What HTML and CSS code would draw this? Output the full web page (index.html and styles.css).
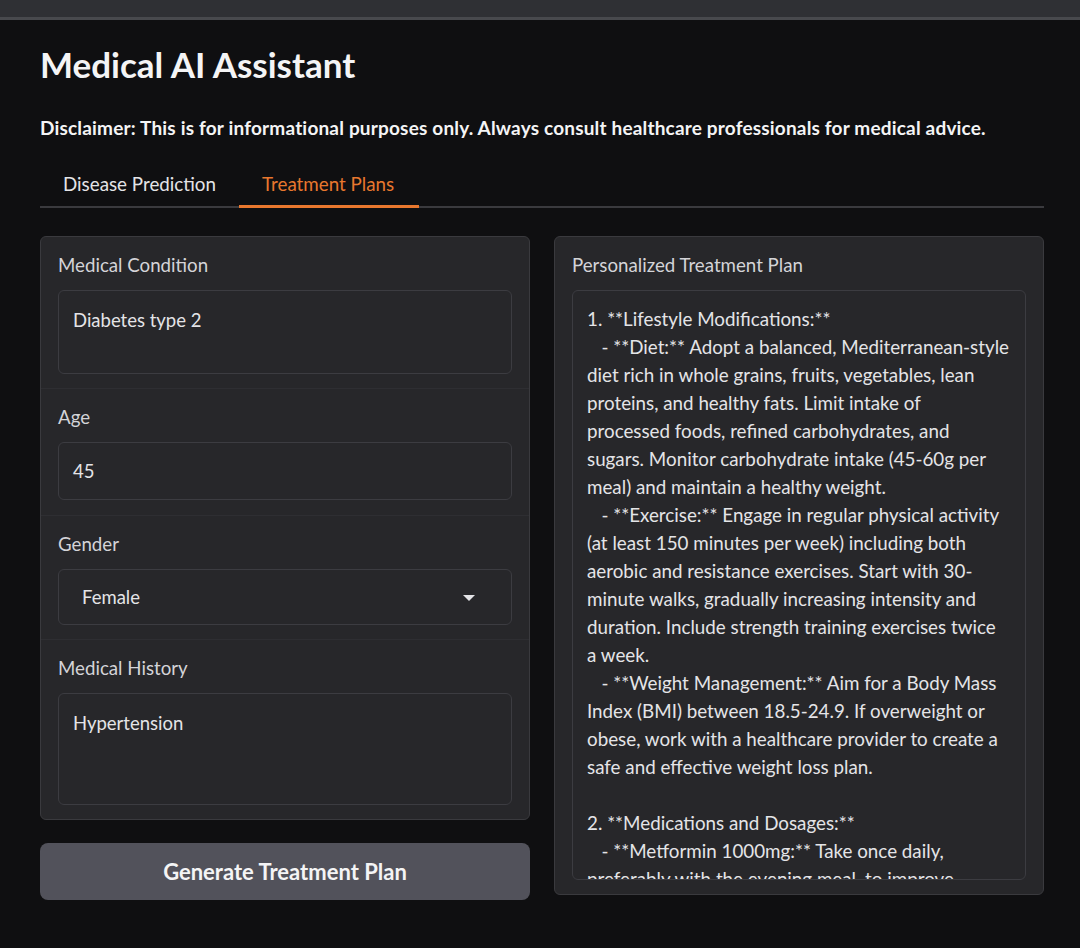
FILE: index.html
```html
<!DOCTYPE html>
<html lang="en">
<head>
<meta charset="utf-8">
<title>Medical AI Assistant</title>
<link rel="stylesheet" href="styles.css">
</head>
<body>
<div class="topbar"></div>
<main class="app">
  <h1 class="title">Medical AI Assistant</h1>
  <p class="disclaimer">Disclaimer: This is for informational purposes only. Always consult healthcare professionals for medical advice.</p>
  <nav class="tabs">
    <button class="tab">Disease Prediction</button>
    <button class="tab active">Treatment Plans</button>
  </nav>
  <div class="row">
    <div class="col">
      <section class="panel form">
        <div class="block">
          <label class="label">Medical Condition</label>
          <div class="field area-sm">Diabetes type 2</div>
        </div>
        <div class="block">
          <label class="label">Age</label>
          <div class="field single">45</div>
        </div>
        <div class="block">
          <label class="label">Gender</label>
          <div class="field select">
            <span>Female</span>
            <svg class="caret" width="14" height="8" viewBox="0 0 14 8"><path d="M1 1 L13 1 L7 7 Z" fill="#e4e4e7"/></svg>
          </div>
        </div>
        <div class="block">
          <label class="label">Medical History</label>
          <div class="field area-md">Hypertension</div>
        </div>
      </section>
      <button class="generate">Generate Treatment Plan</button>
    </div>
    <div class="col">
      <section class="panel output">
        <div class="block">
          <label class="label">Personalized Treatment Plan</label>
          <div class="field plan"><div class="plan-text">1. **Lifestyle Modifications:**
   - **Diet:** Adopt a balanced, Mediterranean-style
diet rich in whole grains, fruits, vegetables, lean
proteins, and healthy fats. Limit intake of
processed foods, refined carbohydrates, and
sugars. Monitor carbohydrate intake (45-60g per
meal) and maintain a healthy weight.
   - **Exercise:** Engage in regular physical activity
(at least 150 minutes per week) including both
aerobic and resistance exercises. Start with 30-
minute walks, gradually increasing intensity and
duration. Include strength training exercises twice
a week.
   - **Weight Management:** Aim for a Body Mass
Index (BMI) between 18.5-24.9. If overweight or
obese, work with a healthcare provider to create a
safe and effective weight loss plan.

2. **Medications and Dosages:**
   - **Metformin 1000mg:** Take once daily,
preferably with the evening meal, to improve
insulin sensitivity and lower blood glucose.</div></div>
        </div>
      </section>
    </div>
  </div>
</main>
</body>
</html>
```

FILE: styles.css
```css
* { box-sizing: border-box; }
html, body { margin: 0; padding: 0; }
body {
  background: #0f0f11;
  color: #e4e4e7;
  font-family: "Source Sans Pro", Lato, "Noto Sans", sans-serif;
  width: 1080px;
  height: 948px;
  overflow: hidden;
}
.topbar {
  height: 20px;
  background: #2f3034;
  border-bottom: 3px solid #48494d;
}
.app {
  padding: 0 36px 0 40px;
}
.title {
  margin: 21px 0 0;
  font-size: 35px;
  line-height: 46px;
  font-weight: 700;
  color: #f4f4f5;
}
.disclaimer {
  margin: 28px 0 0;
  font-size: 19px;
  line-height: 26px;
  font-weight: 700;
  letter-spacing: 0.18px;
  color: #f4f4f5;
}
.tabs {
  margin-top: 23px;
  display: flex;
  border-bottom: 2px solid #3a3a3e;
  height: 44px;
}
.tab {
  background: none;
  border: none;
  font: inherit;
  font-size: 18.8px;
  color: #e4e4e7;
  padding: 0 23px 2px;
  height: 44px;
  line-height: 26px;
  margin-bottom: -2px;
  border-bottom: 3px solid transparent;
  cursor: pointer;
}
.tab.active {
  color: #e8772e;
  border-bottom-color: #e8772e;
  padding: 0 25px 2px 23px;
}
.row {
  margin-top: 28px;
  display: flex;
  gap: 24px;
  align-items: flex-start;
}
.col {
  flex: 1;
  display: flex;
  flex-direction: column;
  gap: 23px;
}
.panel {
  background: #27272a;
  border: 1px solid #3a3a3e;
  border-radius: 6px;
  overflow: hidden;
}
.block {
  padding: 17px 17px 14px;
  display: flex;
  flex-direction: column;
  gap: 14px;
}
.form .block + .block {
  border-top: 1px solid #2e2e32;
}
.form .block:nth-child(2) { padding-bottom: 15px; }
.label {
  font-size: 18.7px;
  line-height: 22px;
  color: #d4d4d8;
}
.field {
  background: #27272a;
  border: 1px solid #3c3c41;
  border-radius: 6px;
  font-size: 18.5px;
  line-height: 28px;
  color: #e4e4e7;
  padding: 15px 14px;
}
.area-sm { height: 84px; }
.area-md { height: 112px; }
.single {
  height: 58px;
  display: flex;
  align-items: center;
  padding: 0 14px;
}
.select {
  height: 56px;
  display: flex;
  align-items: center;
  justify-content: space-between;
  padding: 0 35px 0 23px;
}
.caret { display: block; margin-top: 2px; }
.plan {
  height: 590px;
  overflow: hidden;
  padding: 14px 4px 0 14px;
  font-size: 18.8px;
}
.plan-text {
  white-space: pre;
  overflow: hidden;
  height: 575px;
}
.generate {
  height: 57px;
  background: #52525b;
  border: none;
  border-radius: 8px;
  color: #f4f4f5;
  font: inherit;
  font-size: 22px;
  font-weight: 700;
  cursor: pointer;
}
```
